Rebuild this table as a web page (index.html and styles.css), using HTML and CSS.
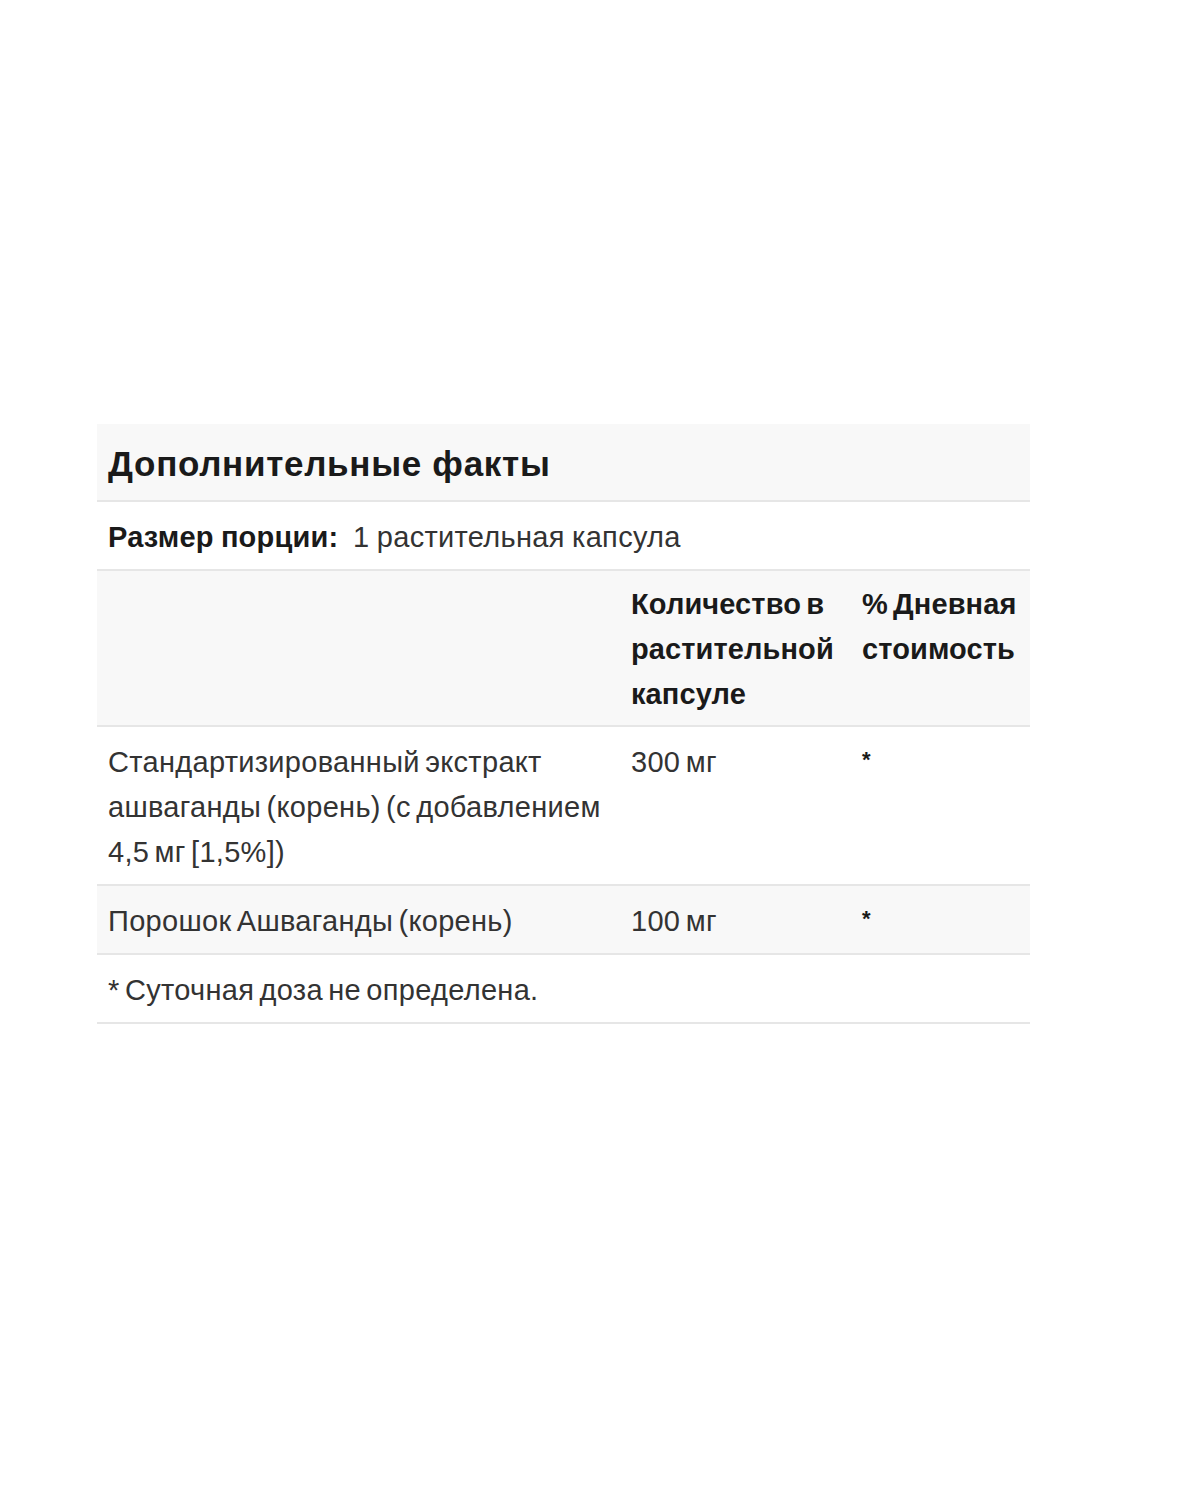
FILE: index.html
```html
<!DOCTYPE html>
<html lang="ru">
<head>
<meta charset="utf-8">
<link rel="stylesheet" href="styles.css">
</head>
<body>
<div class="page">
  <table class="facts">
    <colgroup>
      <col class="c1"><col class="c2"><col class="c3">
    </colgroup>
    <tr class="title-row grey">
      <th colspan="3" class="title">Дополнительные факты</th>
    </tr>
    <tr>
      <td colspan="3" class="serving"><b>Размер порции:</b>&nbsp; 1 растительная капсула</td>
    </tr>
    <tr class="grey head">
      <th></th>
      <th>Количество в растительной капсуле</th>
      <th class="dv">%&nbsp;Дневная стоимость</th>
    </tr>
    <tr>
      <td class="name">Стандартизированный экстракт ашваганды (корень) (с добавлением 4,5 мг [1,5%])</td>
      <td>300 мг</td>
      <td class="ast">*</td>
    </tr>
    <tr class="grey">
      <td class="name">Порошок Ашваганды (корень)</td>
      <td>100 мг</td>
      <td class="ast">*</td>
    </tr>
    <tr>
      <td colspan="3" class="note">* Суточная доза не определена.</td>
    </tr>
  </table>
</div>
</body>
</html>
```
FILE: styles.css
```css
html, body {
  margin: 0;
  padding: 0;
  background: #ffffff;
}
.page {
  width: 1200px;
  height: 1500px;
  padding: 424px 0 0 97px;
  box-sizing: border-box;
}
.facts {
  width: 933px;
  table-layout: fixed;
  border-collapse: collapse;
  font-family: "Liberation Sans", Arial, sans-serif;
  color: #333;
  font-size: 29px;
  letter-spacing: 0.3px;
  word-spacing: -3px;
  line-height: 45px;
}
.c1 { width: 523px; }
.c2 { width: 231px; }
.c3 { width: 179px; }
.facts tr {
  border-bottom: 2px solid #e6e6e6;
}
.facts td, .facts th {
  padding: 11px;
  text-align: left;
  vertical-align: top;
}
.facts td {
  padding-top: 13px;
  padding-bottom: 9px;
}
.facts th {
  font-weight: bold;
  color: #1a1a1a;
  letter-spacing: 0.1px;
}
.facts .head th {
  padding-bottom: 8px;
}
.facts .name {
  padding-right: 0;
}
.facts .dv {
  padding-right: 0;
}
.grey {
  background: #f8f8f8;
}
.facts .title {
  font-size: 35px;
  letter-spacing: 0.7px;
  word-spacing: 0;
  padding: 17px 11px 14px 11px;
}
.facts .serving {
  word-spacing: -1px;
}
.serving b {
  color: #1a1a1a;
  letter-spacing: 0.2px;
}
.facts .ast {
  font-weight: bold;
  color: #1a1a1a;
  font-size: 22px;
  line-height: 30px;
  padding-top: 18px;
}
```
